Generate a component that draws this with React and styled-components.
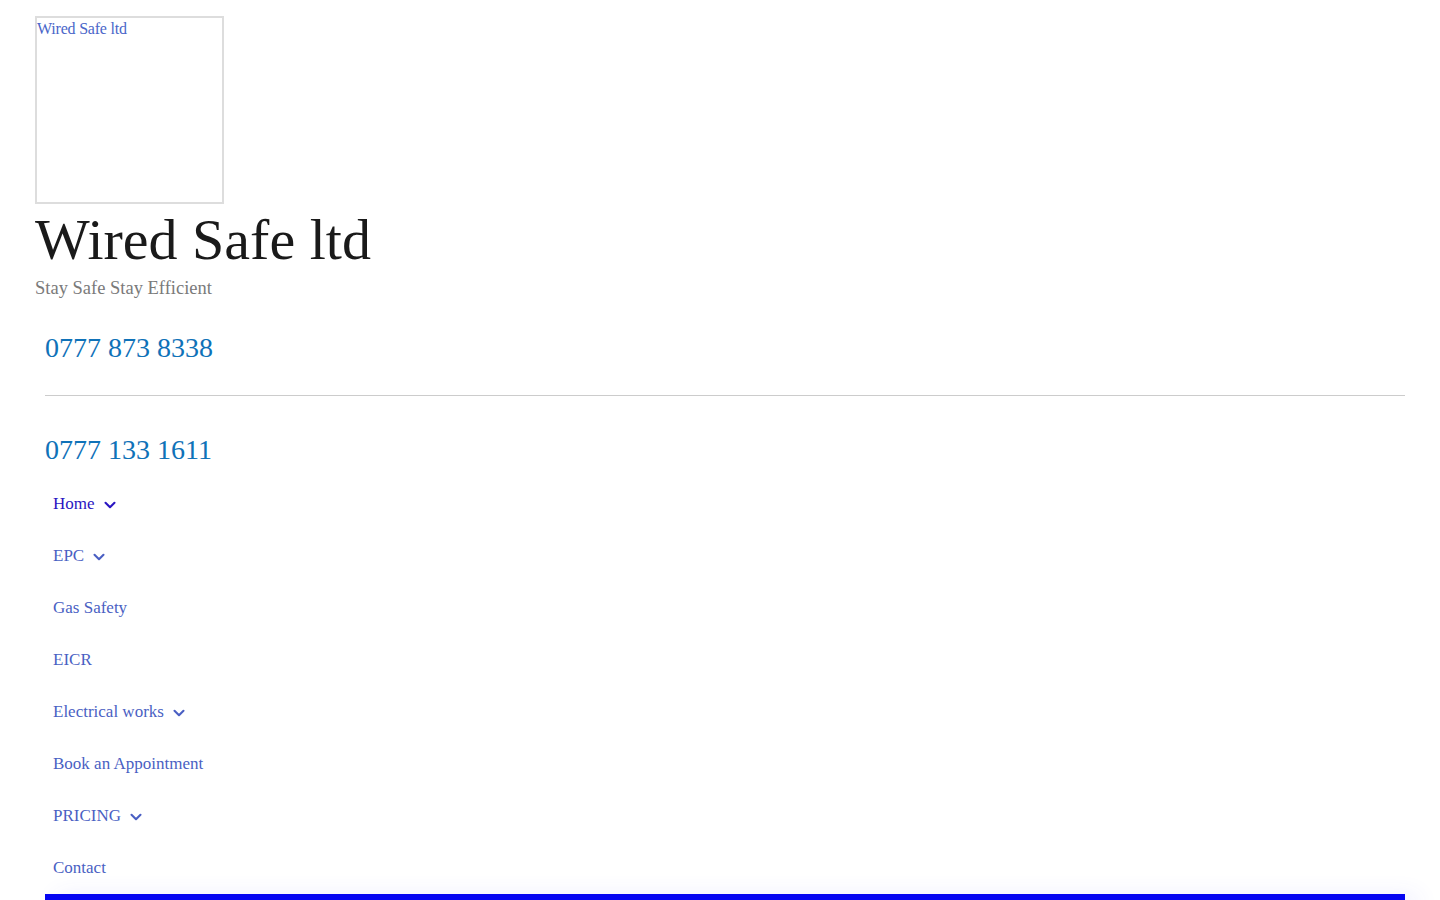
import styled, { createGlobalStyle } from "styled-components";
import { ChevronDown } from "lucide-react";

const GlobalStyle = createGlobalStyle`
  html, body {
    margin: 0;
    padding: 0;
    background: #ffffff;
    font-family: "Liberation Serif", "Times New Roman", serif;
  }
  * {
    box-sizing: border-box;
  }
`;

const navItems = [
  { label: "Home", sub: true, active: true },
  { label: "EPC", sub: true },
  { label: "Gas Safety" },
  { label: "EICR" },
  { label: "Electrical works", sub: true },
  { label: "Book an Appointment" },
  { label: "PRICING", sub: true },
  { label: "Contact" },
];

export default function App() {
  return (
    <>
      <GlobalStyle />
      <Page>
        <Branding>
          <LogoBox>
            <LogoAlt href="#">Wired Safe ltd</LogoAlt>
          </LogoBox>
          <SiteTitle>Wired Safe ltd</SiteTitle>
          <Tagline>Stay Safe Stay Efficient</Tagline>
        </Branding>

        <Contacts>
          <Phone href="#">0777 873 8338</Phone>
          <Divider />
          <Phone href="#" second>
            0777 133 1611
          </Phone>
        </Contacts>

        <Nav>
          {navItems.map((item) => (
            <NavItem key={item.label} href="#" active={item.active}>
              {item.label}
              {item.sub && (
                <Caret>
                  <ChevronDown size={18} strokeWidth={2.8} />
                </Caret>
              )}
            </NavItem>
          ))}
        </Nav>

        <BlueBar />
      </Page>
    </>
  );
}

const Page = styled.div`
  padding: 16px 35px 0;
  min-height: 900px;
  overflow: hidden;
`;

const Branding = styled.div`
  display: flex;
  flex-direction: column;
  align-items: flex-start;
`;

const LogoBox = styled.div`
  width: 189px;
  height: 188px;
  border: 2px solid #dddddd;
  padding: 1px 0 0 0;
`;

const LogoAlt = styled.a`
  display: block;
  font-size: 16px;
  line-height: 20px;
  color: #4a66c9;
  text-decoration: none;
  letter-spacing: -0.2px;
`;

const SiteTitle = styled.h1`
  margin: 1px 0 0;
  font-size: 58px;
  line-height: 1.2;
  font-weight: 400;
  color: #1a1a1a;
`;

const Tagline = styled.p`
  margin: 0;
  font-size: 18.5px;
  line-height: 1.5;
  color: #7a7a7a;
`;

const Contacts = styled.div`
  display: flex;
  flex-direction: column;
  align-items: flex-start;
  margin: 25px 0 0 10px;
`;

const Phone = styled.a`
  display: block;
  font-size: 28px;
  line-height: 42px;
  color: #0f72b8;
  text-decoration: none;
  margin-top: ${(p) => (p.second ? "33px" : "0")};
`;

const Divider = styled.hr`
  align-self: stretch;
  margin: 26px 0 0;
  border: 0;
  border-top: 1px solid #cccccc;
  height: 0;
`;

const Nav = styled.nav`
  display: flex;
  flex-direction: column;
  margin: 7px 0 0 10px;
`;

const NavItem = styled.a`
  display: flex;
  align-items: center;
  height: 52px;
  padding: 0 8px;
  font-size: 17px;
  color: ${(p) => (p.active ? "#2a15c2" : "#4a5fc3")};
  text-decoration: none;
`;

const Caret = styled.span`
  display: inline-flex;
  margin-left: 6px;
  margin-top: 1px;
`;

const BlueBar = styled.div`
  margin-left: 10px;
  height: 12px;
  background: #0505f2;
  box-shadow: 12px 4px 24px rgba(70, 70, 255, 0.14);
`;
